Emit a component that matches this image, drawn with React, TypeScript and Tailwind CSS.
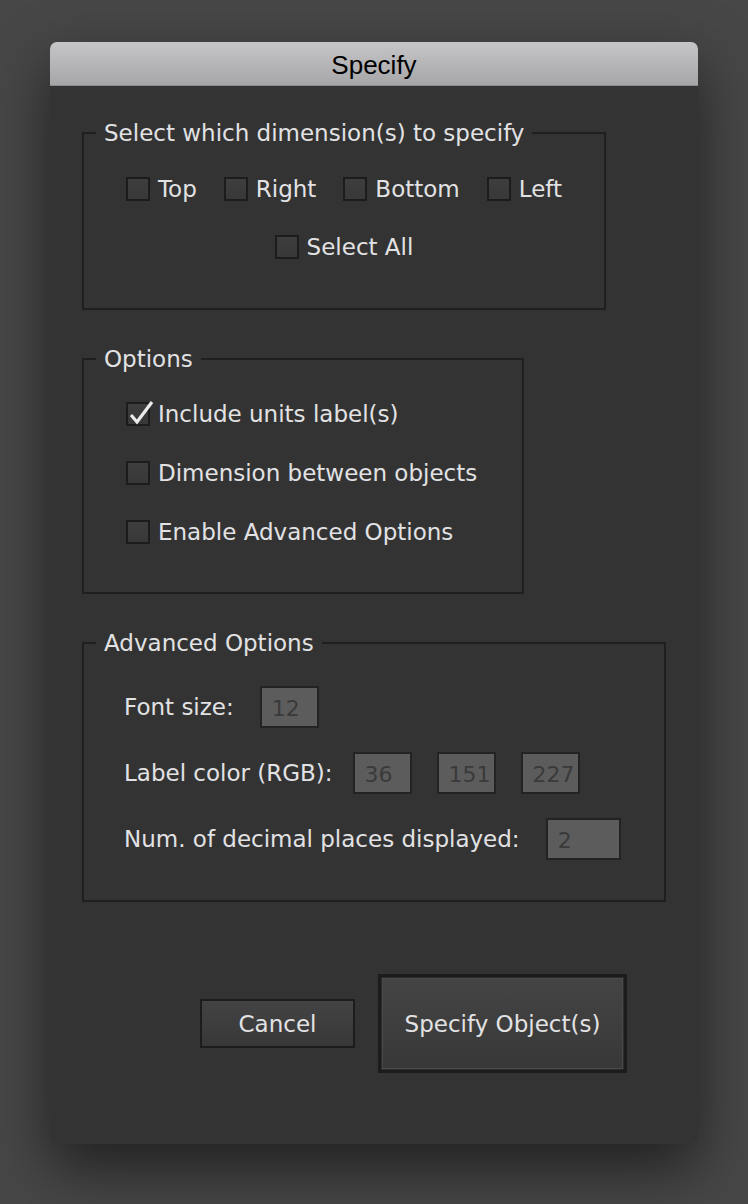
import React from 'react';

const font = { fontFamily: '"DejaVu Sans", "Liberation Sans", sans-serif' };

function Check({ label, checked = false }: { label: string; checked?: boolean }) {
  return (
    <div className="flex items-center gap-[8px]">
      <div className="relative h-[24px] w-[24px] border-2 border-[#1c1c1c] bg-gradient-to-b from-[#3e3e3e] to-[#383838]">
        {checked && (
          <svg className="absolute -left-[1px] -top-[6px]" width="28" height="28" viewBox="0 0 28 28">
            <path d="M4 17 L10 24 L25 4" fill="none" stroke="#ececec" strokeWidth="3.2" strokeLinejoin="miter" />
          </svg>
        )}
      </div>
      <span className="leading-[24px]">{label}</span>
    </div>
  );
}

function Group({ title, className, children }: { title: string; className: string; children: React.ReactNode }) {
  return (
    <div className={`flex flex-col border-2 border-[#1f1f1f] ${className}`}>
      <div className="-mt-[15px] ml-[12px] self-start bg-[#333333] px-[8px] leading-[28px]">{title}</div>
      {children}
    </div>
  );
}

function Field({ value, w }: { value: string; w: string }) {
  return (
    <div className={`flex h-[42px] items-center border-2 border-[#232323] bg-[#5c5c5c] pl-[10px] pt-[2px] text-[22px] text-[#3a3a3a] ${w}`}>
      {value}
    </div>
  );
}

export default function App() {
  return (
    <div className="min-h-[1204px] bg-[#474747] pt-[42px]" style={font}>
      <div className="mx-auto flex w-[648px] flex-col rounded-[7px] shadow-[0_24px_60px_rgba(0,0,0,0.55)]">
        {/* title bar */}
        <div className="flex h-[44px] items-center justify-center rounded-t-[7px] border-b border-[#8c8c8c] bg-gradient-to-b from-[#c6c5c7] to-[#a6a5a7] pt-[3px]">
          <span className="text-[26px] text-black" style={{ fontFamily: '"Liberation Sans", Arial, sans-serif' }}>
            Specify
          </span>
        </div>

        {/* body */}
        <div className="flex flex-col rounded-b-[7px] bg-[#333333] pb-[71px] pl-[32px] pr-[71px] text-[23px] text-[#e2e2e4]">
          <Group title="Select which dimension(s) to specify" className="mt-[46px] h-[178px] w-[524px]">
            <div className="mt-[30px] flex justify-center gap-[27px]">
              <Check label="Top" />
              <Check label="Right" />
              <Check label="Bottom" />
              <Check label="Left" />
            </div>
            <div className="mt-[34px] flex justify-center">
              <Check label="Select All" />
            </div>
          </Group>

          <Group title="Options" className="mt-[48px] h-[236px] w-[442px]">
            <div className="ml-[42px] mt-[29px] flex flex-col gap-[35px]">
              <Check label="Include units label(s)" checked />
              <Check label="Dimension between objects" />
              <Check label="Enable Advanced Options" />
            </div>
          </Group>

          <Group title="Advanced Options" className="mt-[48px] h-[260px] w-[584px]">
            <div className="ml-[40px] mt-[29px] flex flex-col gap-[24px]">
              <div className="flex items-center gap-[26px]">
                <span>Font size:</span>
                <Field value="12" w="w-[59px]" />
              </div>
              <div className="flex items-center gap-[20px]">
                <span>Label color (RGB):</span>
                <div className="flex gap-[25px]">
                  <Field value="36" w="w-[59px]" />
                  <Field value="151" w="w-[59px]" />
                  <Field value="227" w="w-[59px]" />
                </div>
              </div>
              <div className="flex items-center gap-[26px]">
                <span>Num. of decimal places displayed:</span>
                <Field value="2" w="w-[75px]" />
              </div>
            </div>
          </Group>

          <div className="mt-[72px] flex items-center justify-end gap-[23px]">
            <button className="h-[49px] w-[155px] border-2 border-[#1c1c1c] bg-gradient-to-b from-[#434343] to-[#383838] pt-[2px] text-[#e2e2e4]">
              Cancel
            </button>
            <button className="h-[99px] w-[249px] border-[3px] border-[#1c1c1c] bg-[#2c2c2c] p-[1px]">
              <div className="flex h-full w-full items-center justify-center border border-[#4a4a4a] bg-gradient-to-b from-[#444444] to-[#383838] pt-[2px] text-[#e2e2e4]">
                Specify Object(s)
              </div>
            </button>
          </div>
        </div>
      </div>
    </div>
  );
}
